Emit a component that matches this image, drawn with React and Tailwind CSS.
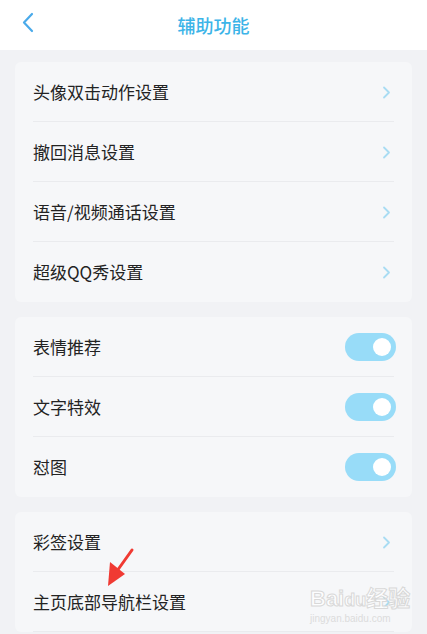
import React from 'react';

const font = { fontFamily: '"Noto Sans CJK SC", "Noto Sans", sans-serif' };

const Chevron = () => (
  <svg width="9" height="13" viewBox="0 0 9 13" fill="none">
    <path d="M2 1.5l5 5-5 5" stroke="#a9dcf3" strokeWidth="1.8" strokeLinecap="round" strokeLinejoin="round" />
  </svg>
);

const Toggle = () => (
  <div className="w-[51px] h-[28px] rounded-full bg-[#98dcf8] flex items-center justify-end pr-[5px]">
    <div className="w-[18px] h-[18px] rounded-full bg-white" />
  </div>
);

const Row = ({ label, toggle, last }) => (
  <div className="h-[60px] mx-[18px] flex items-center justify-between relative">
    <span className="text-[17px] text-[#232323]">{label}</span>
    {toggle ? <div className="-mr-[2px]"><Toggle /></div> : <div className="mr-[3px]"><Chevron /></div>}
    {!last && <div className="absolute left-0 right-0 bottom-0 h-px bg-[#eaebee]" />}
  </div>
);

const Card = ({ children }) => (
  <div className="mx-[15px] bg-[#f6f7f9] rounded-[6px]">{children}</div>
);

export default function App() {
  return (
    <div className="w-[427px] h-[634px] bg-[#f1f2f5] overflow-hidden relative" style={font}>
      <div className="h-[50px] bg-white flex items-center justify-center relative">
        <div className="absolute left-[21px] top-[12px]">
          <svg width="14" height="21" viewBox="0 0 14 21" fill="none">
            <path d="M11 2L3 10.5 11 19" stroke="#4aaaea" strokeWidth="2.2" strokeLinecap="round" strokeLinejoin="round" />
          </svg>
        </div>
        <span className="text-[18px] text-[#3cb4e8] font-medium">辅助功能</span>
      </div>

      <div className="pt-[12px] flex flex-col gap-[15px]">
        <Card>
          <Row label="头像双击动作设置" />
          <Row label="撤回消息设置" />
          <Row label="语音/视频通话设置" />
          <Row label="超级QQ秀设置" last />
        </Card>
        <Card>
          <Row label="表情推荐" toggle />
          <Row label="文字特效" toggle />
          <Row label="怼图" toggle last />
        </Card>
        <Card>
          <Row label="彩签设置" />
          <Row label="主页底部导航栏设置" />
        </Card>
      </div>

      <svg className="absolute left-0 top-0" width="427" height="634" viewBox="0 0 427 634">
        <path d="M132 550 L117 571" stroke="#f03a33" strokeWidth="3" strokeLinecap="round" />
        <path d="M108 586 L110 562 L125 574 Z" fill="#f03a33" />
      </svg>

      <div className="absolute left-[310px] top-[588px] flex flex-col items-start leading-none pointer-events-none">
        <span className="text-[22px] font-bold text-white/80" style={{ fontFamily: '"Liberation Sans", "Noto Sans CJK SC", sans-serif', WebkitTextStroke: '1px #d8d8d8' }}>Bai<span className="text-[18px]">du</span>经验</span>
        <span className="text-[10px] text-[#dcdcdc] mt-[4px]" style={{ fontFamily: '"Liberation Sans", sans-serif' }}>jingyan.baidu.com</span>
      </div>
    </div>
  );
}
